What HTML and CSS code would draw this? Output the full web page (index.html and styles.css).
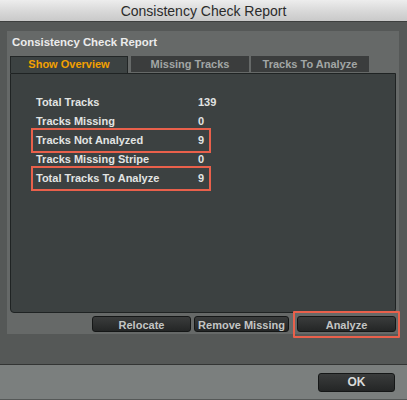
FILE: index.html
```html
<!DOCTYPE html>
<html>
<head>
<meta charset="utf-8">
<link rel="stylesheet" href="styles.css">
</head>
<body>
<div class="window">
  <div class="titlebar">Consistency Check Report</div>
  <div class="main">
    <div class="panel">
      <div class="panel-title">Consistency Check Report</div>
      <div class="tabs">
        <div class="tab active">Show Overview</div>
        <div class="tab">Missing Tracks</div>
        <div class="tab">Tracks To Analyze</div>
      </div>
      <div class="content">
        <div class="row"><span class="label">Total Tracks</span><span class="value">139</span></div>
        <div class="row"><span class="label">Tracks Missing</span><span class="value">0</span></div>
        <div class="row hl"><span class="label">Tracks Not Analyzed</span><span class="value">9</span></div>
        <div class="row"><span class="label">Tracks Missing Stripe</span><span class="value">0</span></div>
        <div class="row hl"><span class="label">Total Tracks To Analyze</span><span class="value">9</span></div>
      </div>
      <div class="buttons">
        <div class="btn b-relocate">Relocate</div>
        <div class="btn b-remove">Remove Missing</div>
        <div class="hl-box"><div class="btn b-analyze">Analyze</div></div>
      </div>
    </div>
  </div>
  <div class="footer">
    <div class="btn ok">OK</div>
  </div>
</div>
</body>
</html>
```
FILE: styles.css
```css
html, body {
  margin: 0;
  padding: 0;
}
body {
  width: 407px;
  height: 400px;
  overflow: hidden;
  background: #555857;
  font-family: "Liberation Sans", Arial, sans-serif;
}
.window {
  display: flex;
  flex-direction: column;
  height: 400px;
}
.titlebar {
  height: 21px;
  line-height: 22px;
  text-align: center;
  font-size: 14px;
  color: #2b2b2b;
  background: linear-gradient(#ededed, #d6d6d6 60%, #c9c9c9);
  border-bottom: 1px solid #3d3f3e;
}
.main {
  height: 342px;
  padding: 9px 8px 0 7px;
  box-sizing: border-box;
}
.panel {
  height: 303px;
  background: #666968;
  padding: 0 3px;
  box-sizing: border-box;
  display: flex;
  flex-direction: column;
}
.panel-title {
  height: 25px;
  line-height: 23px;
  padding-left: 2px;
  font-size: 11.4px;
  font-weight: bold;
  color: #ececec;
}
.tabs {
  display: flex;
  align-items: flex-start;
  height: 17px;
}
.tab {
  width: 118px;
  height: 16px;
  line-height: 16px;
  box-sizing: border-box;
  text-align: center;
  font-size: 11px;
  font-weight: bold;
  color: #a2a6a5;
  background: #3b3d3d;
  margin-right: 2px;
}
.tab:nth-child(2) {
  margin-left: 1px;
}
.tab.active {
  height: 17px;
  line-height: 15px;
  color: #f3a000;
  background: #3c4242;
  border: 1px solid #222626;
  border-bottom: none;
}
.content {
  height: 240px;
  width: 386px;
  box-sizing: border-box;
  background: #3c4141;
  border: 1px solid #1f2323;
  border-radius: 0 0 4px 4px;
  padding-top: 19px;
}
.row {
  display: flex;
  width: 174px;
  height: 19px;
  line-height: 19px;
  margin-left: 23px;
  padding-left: 2px;
  box-sizing: border-box;
  font-size: 11px;
  font-weight: bold;
  color: #e2e4e3;
}
.row.hl {
  outline: 2px solid #e9604b;
  outline-offset: 1px;
}
.label {
  width: 162px;
  flex: none;
}
.value {
  flex: none;
}
.buttons {
  display: flex;
  justify-content: flex-end;
  align-items: center;
  margin-top: 3px;
  width: 386px;
  height: 16px;
}
.btn {
  height: 16px;
  line-height: 16px;
  box-sizing: border-box;
  text-align: center;
  font-size: 11px;
  font-weight: bold;
  color: #c3c5c4;
  background: linear-gradient(#3a3c3c, #242626);
  border: 1px solid #151717;
  border-radius: 3px;
}
.b-relocate {
  width: 99px;
  margin-right: 3px;
}
.b-remove {
  width: 95px;
  margin-right: 4px;
}
.hl-box {
  border: 2px solid #e9604b;
  padding: 3px 2px 4px 2px;
  margin-right: -4px;
  border-radius: 1px;
}
.b-analyze {
  width: 99px;
}
.footer {
  height: 35px;
  background: #7b7f7e;
  border-top: 1px solid #333534;
  display: flex;
  justify-content: flex-end;
  padding: 8px 12px 0 0;
  box-sizing: border-box;
}
.btn.ok {
  width: 77px;
  height: 19px;
  line-height: 17px;
  font-size: 12px;
  color: #d8dad9;
}
```
